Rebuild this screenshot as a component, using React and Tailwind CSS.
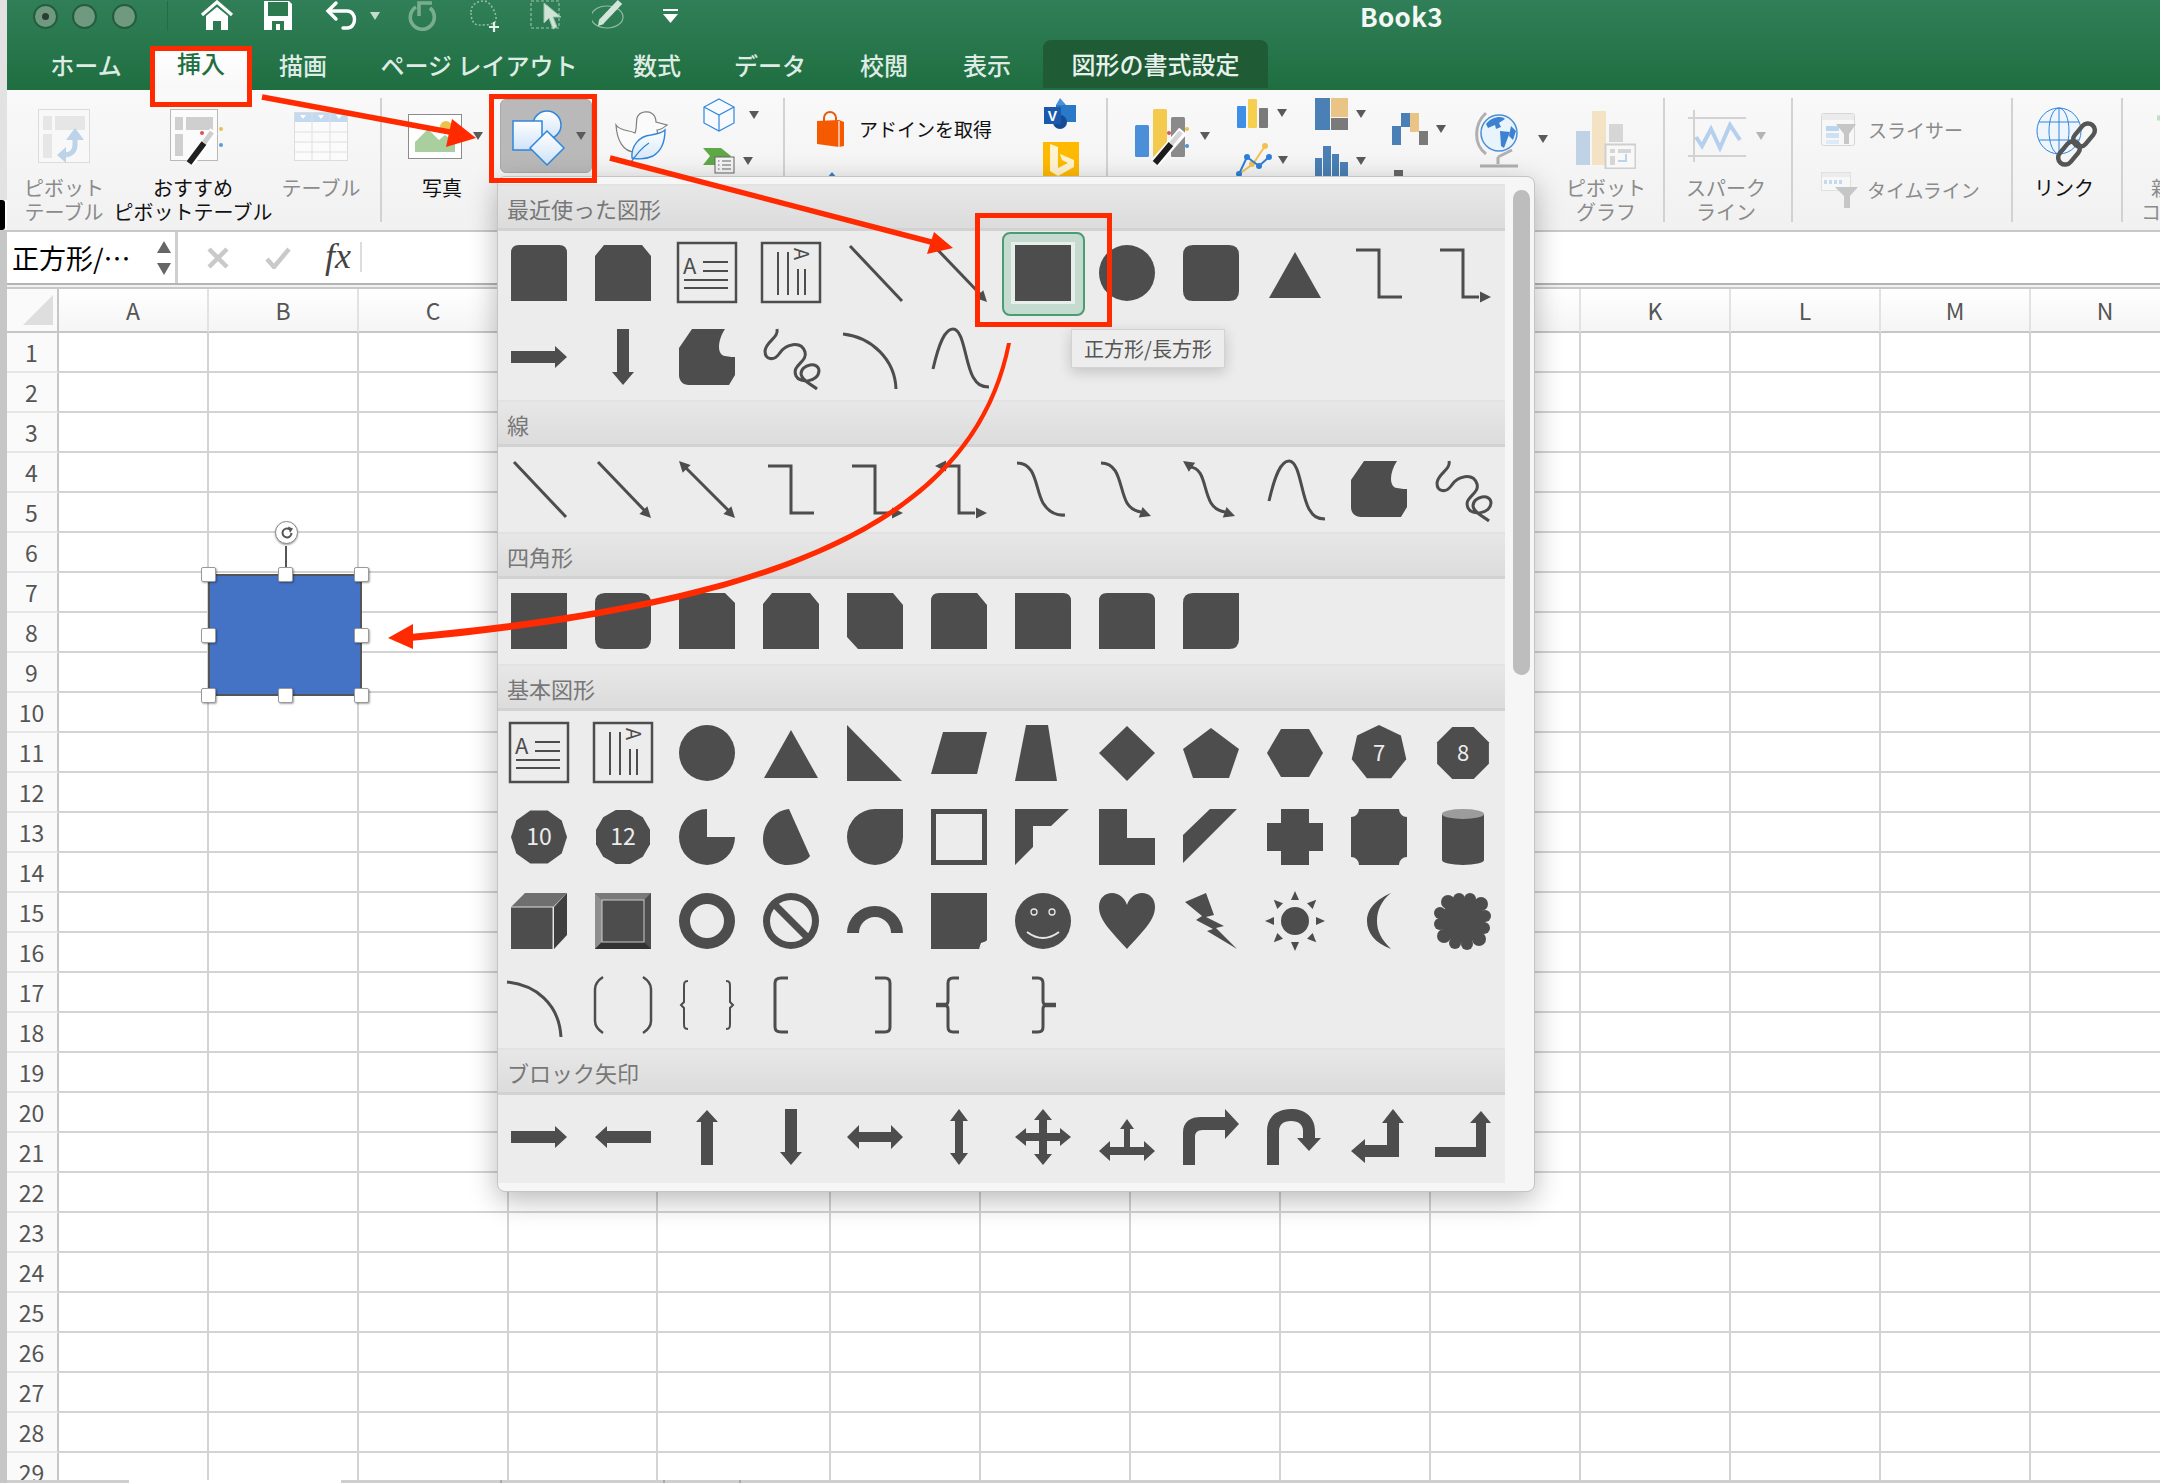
import React from 'react';

const c = '#4d4d4d';
const bg = '#ececec';

const pts = (n, rot = 0, rx = 28, ry = 28) =>
  Array.from({ length: n }, (_, i) => {
    const a = ((rot + (360 * i) / n) * Math.PI) / 180;
    return `${(28 + rx * Math.sin(a)).toFixed(1)},${(28 - ry * Math.cos(a)).toFixed(1)}`;
  }).join(' ');

const F = ({ d }) => <path d={d} fill={c} />;
const L = ({ d, w = 3 }) => <path d={d} fill="none" stroke={c} strokeWidth={w} />;
const Head = ({ x, y, a, s = 1 }) => (
  <polygon points="0,0 -11,-5.5 -11,5.5" fill={c} transform={`translate(${x} ${y}) rotate(${a}) scale(${s})`} />
);
const Num = ({ t, size = 19 }) => (
  <text x="28" y={28 + size * 0.36} textAnchor="middle" fontSize={size} fill={bg} fontFamily="'Noto Sans CJK JP','Liberation Sans',sans-serif">{t}</text>
);

const Scribble = () => <L d="M14 0C16 9 3 12 2 22C2 31 11 32 16 25C22 15 38 11 42 23C45 33 28 36 33 47C37 55 55 53 56 42C56 32 38 35 38 45C39 52 48 55 54 60" />;
const Free = () => <F d="M13 0H46C38 12 38 26 46 27C50 28 56 28 56 28V46L50 56H10C4 56 0 52 0 46V19Z" />;
const Wave = () => <L d="M2 40C8 14 14 0 22 0C33 0 34 34 42 48C46 55 50 58 58 58" />;
const Elbow = () => <L d="M5 5H28V52H51" />;
const TextBox = () => (
  <>
    <rect x="-1" y="-2" width="58" height="59" fill="none" stroke={c} strokeWidth="2.5" />
    <text x="4" y="29" fontSize="22" fill={c} fontFamily="'Noto Sans CJK JP','Liberation Sans',sans-serif">A</text>
    <path d="M24 17H49M24 26H49M5 35H49M5 43H49" stroke={c} strokeWidth="2" />
  </>
);
const VTextBox = () => (
  <>
    <rect x="-1" y="-2" width="58" height="59" fill="none" stroke={c} strokeWidth="2.5" />
    <text x="3" y="-31" fontSize="20" fill={c} transform="rotate(90)" fontFamily="'Noto Sans CJK JP','Liberation Sans',sans-serif">A</text>
    <path d="M15 7V50M25 7V50M35 24V50M42 24V50" stroke={c} strokeWidth="2" />
  </>
);

const S = {
  rect: <F d="M0 0H56V56H0Z" />,
  round: <F d="M10 0H46Q56 0 56 10V46Q56 56 46 56H10Q0 56 0 46V10Q0 0 10 0Z" />,
  snip1: <F d="M0 0H46L56 10V56H0Z" />,
  snip2: <F d="M9 0H47L56 11V56H0V11Z" />,
  snipD: <F d="M0 0H46L56 12V56H11L0 44Z" />,
  snipR: <F d="M8 0H46L56 12V56H0V8Q0 0 8 0Z" />,
  round1: <F d="M0 0H48Q56 0 56 8V56H0Z" />,
  round2: <F d="M8 0H48Q56 0 56 8V56H0V8Q0 0 8 0Z" />,
  roundD: <F d="M10 0H56V46Q56 56 46 56H0V10Q0 0 10 0Z" />,
  ellipse: <ellipse cx="28" cy="28" rx="28" ry="28" fill={c} />,
  tri0: <F d="M28 7L54 53H2Z" />,
  tri: <F d="M28 5L55 53H1Z" />,
  rtri: <F d="M0 0L55 56H0Z" />,
  para: <F d="M12 7H56L46 49H0Z" />,
  trap: <F d="M11 0H33L42 56H0Z" transform="translate(7 0)" />,
  diamond: <polygon points="28,1 56,28 28,56 0,28" fill={c} />,
  pent: <polygon points="28,3 56,24 46,53 10,53 0,24" fill={c} />,
  hex: <polygon points="14,4 42,4 56,28 42,52 14,52 0,28" fill={c} />,
  hept: <><polygon points={pts(7, 0)} fill={c} /><Num t="7" size={22} /></>,
  oct: <><polygon points={pts(8, 22.5)} fill={c} /><Num t="8" size={22} /></>,
  dec: <><polygon points={pts(10, 18)} fill={c} /><Num t="10" size={23} /></>,
  dod: <><polygon points={pts(12, 15)} fill={c} /><Num t="12" size={23} /></>,
  line: <L d="M3 1L55 56" />,
  lineA: <><L d="M3 1L50 50" /><Head x={56} y={57} a={46} /></>,
  lineD: <><L d="M6 6L50 50" /><Head x={0} y={0} a={226} /><Head x={56} y={57} a={46} /></>,
  elbow: <Elbow />,
  elbowA: <><L d="M5 5H28V52H44" /><Head x={56} y={52} a={0} /></>,
  elbowD: <><L d="M15 5H28V52H44" /><Head x={4} y={5} a={180} /><Head x={56} y={52} a={0} /></>,
  curve: <L d="M2 2C22 2 20 28 28 42C33 50 40 55 50 54" />,
  curveA: <><L d="M2 2C22 2 20 28 28 42C31 47 36 50 42 51" /><Head x={52} y={55} a={20} /></>,
  curveD: <><L d="M6 6C22 6 20 28 28 42C31 47 36 50 42 51" /><Head x={0} y={0} a={215} /><Head x={52} y={55} a={20} /></>,
  free: <Free />,
  scribble: <Scribble />,
  wave: <Wave />,
  arc0: <L d="M-4 5C24 8 48 30 49 60" />,
  textbox: <TextBox />,
  vtextbox: <VTextBox />,
  pie: <F d="M28 28V0A28 28 0 1 0 56 28Z" />,
  chord: <F d="M26 0C10 2 0 16 0 30C0 46 12 56 24 56C34 56 44 52 47 47Z" />,
  tear: <F d="M56 0V28A28 28 0 1 1 28 0Z" />,
  frame: <path d="M0 0H56V56H0ZM5 5V51H51V5Z" fill={c} fillRule="evenodd" />,
  half: <F d="M0 0H54L36 17H18V38L0 56Z" />,
  lshape: <F d="M0 0H28V29H56V56H0Z" />,
  stripe: <F d="M27 0H54L0 54V26Z" />,
  plus: <F d="M14 0H42V14H56V42H42V56H14V42H0V14H14Z" />,
  plaque: <F d="M8 0H48A8 8 0 0 0 56 8V48A8 8 0 0 0 48 56H8A8 8 0 0 0 0 48V8A8 8 0 0 0 8 0Z" />,
  can: <><F d="M7 5V51A21 5 0 0 0 49 51V5Z" /><ellipse cx="28" cy="5" rx="21" ry="5" fill="#9c9c9c" /></>,
  cube: <><F d="M0 14H42V56H0Z" /><path d="M0 14L14 0H56L42 14Z" fill="#6f6f6f" /><path d="M43 14L56 0V42L43 56Z" fill="#3f3f3f" /><path d="M0 14H42V56" fill="none" stroke="#ddd" strokeWidth="1" /></>,
  bevel: <><F d="M0 0H56V56H0Z" /><path d="M0 0H56L49 7H7Z" fill="#7a7a7a" /><path d="M0 0L7 7V49L0 56Z" fill="#8e8e8e" /><path d="M0 56L7 49H49L56 56Z" fill="#333" /><rect x="7" y="7" width="42" height="42" fill="none" stroke="#ccc" strokeWidth="1" /></>,
  donut: <path d="M28 0A28 28 0 1 1 28 56A28 28 0 1 1 28 0ZM28 11A17 17 0 1 0 28 45A17 17 0 1 0 28 11Z" fill={c} fillRule="evenodd" />,
  no: <><path d="M28 0A28 28 0 1 1 28 56A28 28 0 1 1 28 0ZM28 7A21 21 0 1 0 28 49A21 21 0 1 0 28 7Z" fill={c} fillRule="evenodd" /><path d="M12 12L44 44" stroke={c} strokeWidth="7" /></>,
  barc: <F d="M0 40A28 27 0 0 1 56 40H44A16 16 0 0 0 12 40Z" />,
  fold: <><F d="M0 0H56V47L48 56H0Z" /><path d="M48 56L50 50L56 48Z" fill="#f4f4f4" /></>,
  smile: <><circle cx="28" cy="28" r="28" fill={c} /><circle cx="19" cy="19" r="3" fill={c} stroke="#e6e6e6" strokeWidth="1.3" /><circle cx="37" cy="19" r="3" fill={c} stroke="#e6e6e6" strokeWidth="1.3" /><path d="M12 39Q28 51 44 39" fill="none" stroke="#e6e6e6" strokeWidth="2" /></>,
  heart: <F d="M28 56C14 40 0 28 0 14C0 5 6 0 13 0C20 0 26 5 28 12C30 5 36 0 43 0C50 0 56 5 56 14C56 28 42 40 28 56Z" />,
  bolt: <F d="M2 9L23 0L31 22L23 24L41 33L33 35L54 56L24 38L30 36L13 27L19 23Z" />,
  sun: <><circle cx="28" cy="28" r="14" fill={c} />{[0, 45, 90, 135, 180, 225, 270, 315].map((a) => <polygon key={a} points="24,7 32,7 28,-2" fill={c} transform={`rotate(${a} 28 28)`} />)}</>,
  moon: <F d="M40 0C22 8 16 18 16 28C16 40 24 50 40 56C30 46 26 38 26 28C26 18 30 8 40 0Z" />,
  cloud: <g fill={c}>{[[13, 9, 7], [24, 6, 6], [35, 6, 6], [46, 11, 7], [50, 23, 6], [49, 35, 6], [44, 46, 7], [32, 51, 6], [20, 50, 6], [9, 43, 7], [5, 31, 6], [5, 20, 6], [28, 28, 22]].map(([x, y, r], i) => <circle key={i} cx={x} cy={y} r={r} />)}</g>,
  arc: <L d="M-4 5C24 8 48 26 50 60" />,
  dbracket: <L d="M8 0C2 4 0 8 0 12V44C0 48 2 52 8 56M48 0C54 4 56 8 56 12V44C56 48 54 52 48 56" w={2.5} />,
  dbrace: <L d="M9 4C5 4 5 6 5 10V25L2 28L5 31V46C5 50 5 52 9 52M47 4C51 4 51 6 51 10V25L54 28L51 31V46C51 50 51 52 47 52" w={2} />,
  lb: <L d="M25 1H18Q12 1 12 6V50Q12 55 18 55H25" />,
  rb: <L d="M28 1H38Q43 1 43 6V50Q43 55 38 55H28" />,
  lbr: <><L d="M28 1H22Q17 1 17 6V24Q17 28 13 28Q17 28 17 32V50Q17 55 22 55H28" /><path d="M5 28H16" stroke={c} strokeWidth="4.5" /></>,
  rbr: <><L d="M17 1H23Q28 1 28 6V24Q28 28 32 28Q28 28 28 32V50Q28 55 23 55H17" /><path d="M30 28H41" stroke={c} strokeWidth="4.5" /></>,
  aR: <F d="M0 22H44V17L56 28L44 39V34H0Z" />,
  aL: <F d="M56 22H12V17L0 28L12 39V34H56Z" />,
  aU: <F d="M22 56V13H17L28 1L39 13H34V56Z" />,
  aD: <F d="M22 0H34V43H39L28 56L17 43H22Z" />,
  aLR: <F d="M0 28L12 16V23H44V16L56 28L44 40V33H12V40Z" />,
  aUD: <F d="M28 0L37 12H32V44H37L28 56L19 44H24V12H19Z" />,
  aQ: <F d="M28 0L37 11H32V24H45V19L56 28L45 37V32H32V45H37L28 56L19 45H24V32H11V37L0 28L11 19V24H24V11H19Z" />,
  aLRU: <F d="M28 10L35 20H31V38H45V32L56 42L45 52V46H11V52L0 42L11 32V38H25V20H21Z" />,
  aBent: <F d="M0 56V24C0 12 8 8 18 8H42V0L56 15L42 30V21H20C14 21 12 24 12 28V56Z" />,
  aUturn: <F d="M0 56V22C0 8 10 0 24 0C38 0 48 8 48 22V29H54L42 42L30 29H36V22C36 16 32 12 24 12C16 12 12 16 12 22V56Z" />,
  aLU: <F d="M42 0L53 14H48V48H14V54L0 42L14 30V36H36V14H31Z" />,
  aBU: <F d="M0 38H41V14H35L46 2L56 14H51V48H0Z" />,
};

const Shape = ({ k }) => (
  <svg viewBox="0 0 56 56" className="h-[56px] w-[56px] overflow-visible">{S[k]}</svg>
);

const Caret = ({ dim }) => (
  <svg viewBox="0 0 10 8" className="h-[8px] w-[10px] shrink-0">
    <polygon points="0,0 10,0 5,8" fill={dim ? '#b4b4b4' : '#5a5a5a'} />
  </svg>
);

/* ---------- quick-access toolbar icons ---------- */
const QSvg = ({ children, className = 'ml-0' }) => (
  <svg viewBox="0 0 34 34" className={`h-[34px] w-[34px] shrink-0 ${className}`}>{children}</svg>
);
const Faded = '#79ad90';

const TitleRow = () => (
  <div className="flex h-[32px] items-center">
    <div className="ml-[26px] flex h-[25px] w-[25px] items-center justify-center rounded-full border-2 border-[#245c3e] bg-[#6f9a80]">
      <div className="h-[7px] w-[7px] rounded-full bg-[#2d3b33]" />
    </div>
    <div className="ml-[14px] h-[25px] w-[25px] rounded-full border-2 border-[#245c3e] bg-[#6f9a80]" />
    <div className="ml-[15px] h-[25px] w-[25px] rounded-full border-2 border-[#245c3e] bg-[#6f9a80]" />
    <div className="ml-[30px] h-[30px] w-[1px] bg-[#28694a]" />
    <QSvg className="ml-[32px]">
      <path d="M2 16L17 3L32 16" fill="none" stroke="#fff" strokeWidth="3.2" />
      <path d="M6 17L17 8L28 17V31H21V22H13V31H6Z" fill="#fff" />
    </QSvg>
    <QSvg className="ml-[27px]">
      <path d="M3 2H28L31 5V31H3Z" fill="#fff" />
      <rect x="7" y="3" width="20" height="14" fill="#2d7a50" />
      <rect x="11" y="22" width="12" height="9" fill="#2d7a50" />
      <rect x="15" y="25" width="4" height="6" fill="#fff" />
    </QSvg>
    <QSvg className="ml-[29px]">
      <path d="M12 4L4 12L12 20" fill="none" stroke="#fff" strokeWidth="3.4" strokeLinecap="round" />
      <path d="M5 12H23C33 12 33 29 23 29H19" fill="none" stroke="#fff" strokeWidth="3.4" strokeLinecap="round" />
    </QSvg>
    <div className="ml-[12px]">
      <svg viewBox="0 0 10 8" className="h-[8px] w-[10px]"><polygon points="0,0 10,0 5,8" fill="#c4dccf" /></svg>
    </div>
    <QSvg className="ml-[24px]">
      <path d="M12 8A12 12 0 1 0 26 9" fill="none" stroke={Faded} strokeWidth="3.6" />
      <path d="M28 4H15V17" fill="none" stroke={Faded} strokeWidth="3.6" />
    </QSvg>
    <QSvg className="ml-[29px]">
      <path d="M4 13C4 5 11 2 17 2C23 2 30 14 29 21C28 26 18 26 12 26C6 26 4 20 4 13" fill="none" stroke="#8fbda4" strokeWidth="1.6" strokeDasharray="2 2" />
      <path d="M27 23V33M22 28H32" stroke="#e4f0e9" strokeWidth="2.2" />
    </QSvg>
    <QSvg className="ml-[28px]">
      <rect x="2" y="2" width="28" height="27" fill="none" stroke={Faded} strokeWidth="1.6" strokeDasharray="3 2" />
      <path d="M15 4V24L20 19L24 30L28 28L24 18H32Z" fill="#cfe3d7" stroke="#9cc4ae" strokeWidth="1" />
    </QSvg>
    <QSvg className="ml-[29px]">
      <ellipse cx="15" cy="18" rx="16" ry="11" fill="none" stroke="#8fbda4" strokeWidth="1.2" />
      <path d="M9 23L28 3" stroke="#d4e6db" strokeWidth="6" />
      <path d="M6 27L7 21L12 25Z" fill="#d4e6db" />
    </QSvg>
    <div className="ml-[37px] flex w-[15px] flex-col gap-[3px]">
      <div className="h-[2px] w-[15px] bg-white" />
      <svg viewBox="0 0 15 9" className="h-[9px] w-[15px]"><polygon points="0,0 15,0 7.5,9" fill="#fff" /></svg>
    </div>
    <div className="ml-[682px] text-[26px] font-bold leading-[30px] tracking-[0.3px] text-[#f4f8f5]">Book3</div>
  </div>
);

const tabBase = 'flex items-center justify-center text-[24px] font-medium leading-[28px]';
const tabIdle = `${tabBase} h-[50px] text-[#dfece5]`;

const Tabs = () => (
  <div className="flex h-[58px] items-end">
    <div className={`${tabIdle} ml-[23px] w-[112px]`}>ホーム</div>
    <div className="ml-[13px] flex h-[40px] w-[92px] justify-center bg-linear-to-b from-[#ffffff] to-[#f8f8f8] text-[24px] font-medium leading-[28px] text-[#1f6f40]">
      <span className="-mt-[1px]">挿入</span>
    </div>
    <div className={`${tabIdle} w-[112px]`}>描画</div>
    <div className={`${tabIdle} w-[240px]`}>ページ レイアウト</div>
    <div className={`${tabIdle} w-[116px]`}>数式</div>
    <div className={`${tabIdle} w-[110px]`}>データ</div>
    <div className={`${tabIdle} w-[118px]`}>校閲</div>
    <div className={`${tabIdle} w-[88px]`}>表示</div>
    <div className={`${tabBase} ml-[12px] h-[48px] mb-[2px] w-[225px] rounded-t-[8px] bg-[#1f5c36] text-[#e8f2ec]`}>図形の書式設定</div>
  </div>
);

/* ---------- ribbon icons ---------- */
const PivotI = () => (
  <svg viewBox="0 0 52 54" className="h-[54px] w-[52px]">
    <rect x="0.5" y="0.5" width="51" height="53" fill="#f8f8f8" stroke="#dcdcdc" />
    <rect x="5" y="7" width="9" height="14" fill="#e6e6e6" /><rect x="17" y="7" width="30" height="14" fill="#e6e6e6" /><rect x="5" y="25" width="9" height="24" fill="#e6e6e6" />
    <path d="M37 26V36C37 43 32 46 26 46" fill="none" stroke="#bcd3ea" strokeWidth="5" />
    <path d="M37 19L46 31H28Z" fill="#bcd3ea" /><path d="M19 46L28 38V54Z" fill="#bcd3ea" />
  </svg>
);
const RecPivotI = () => (
  <svg viewBox="0 0 56 56" className="h-[56px] w-[56px] overflow-visible">
    <rect x="5.5" y="1.5" width="47" height="51" fill="#fbfbfb" stroke="#b9b9b9" />
    <rect x="10" y="9" width="8" height="13" fill="#cfcfcf" /><rect x="21" y="9" width="27" height="13" fill="#cfcfcf" /><rect x="10" y="26" width="8" height="22" fill="#cfcfcf" />
    <path d="M25 55L49 23" stroke="#fff" strokeWidth="9" />
    <path d="M24 55L39 35" stroke="#1f1f1f" strokeWidth="6" /><path d="M39 35L47 24" stroke="#cfcfcf" strokeWidth="5" />
    <circle cx="37" cy="25" r="2" fill="#d95555" /><circle cx="56" cy="21" r="2" fill="#eec04c" /><circle cx="56" cy="37" r="2" fill="#5e9bd8" />
  </svg>
);
const TableI = () => (
  <svg viewBox="0 0 54 49" className="h-[49px] w-[54px]">
    <rect x="0.5" y="0.5" width="53" height="48" fill="#fbfbfb" stroke="#dcdcdc" />
    <rect x="1" y="1" width="52" height="9" fill="#c3d9ef" />
    <path d="M18 0V49M36 0V49M0 20H54M0 30H54M0 40H54" stroke="#dfdfdf" />
    <path d="M6 3H12L9 7ZM24 3H30L27 7ZM42 3H48L45 7Z" fill="#fff" />
  </svg>
);
const PhotoI = () => (
  <svg viewBox="0 0 54 45" className="h-[45px] w-[54px]">
    <rect x="0.5" y="0.5" width="53" height="44" fill="#fff" stroke="#8c8c8c" />
    <circle cx="38" cy="13" r="6" fill="#eec04c" />
    <path d="M7 38V28L20 15L31 26L37 21L47 28V38Z" fill="#a9cf9f" />
  </svg>
);
const ShapesI = () => (
  <svg viewBox="0 0 56 56" className="h-[56px] w-[56px] overflow-visible">
    <defs>
      <linearGradient id="sg" x1="0" y1="0" x2="0" y2="1"><stop offset="0" stopColor="#ffffff" /><stop offset="1" stopColor="#cfe3f7" /></linearGradient>
    </defs>
    <circle cx="35" cy="17" r="14" fill="url(#sg)" stroke="#2f86dc" strokeWidth="1.5" />
    <rect x="1" y="13" width="29" height="29" fill="url(#sg)" stroke="#2f86dc" strokeWidth="1.5" />
    <polygon points="35,23 52,40 35,57 18,40" fill="url(#sg)" stroke="#2f86dc" strokeWidth="1.5" />
  </svg>
);
const DuckI = () => (
  <svg viewBox="0 0 52 52" className="h-[52px] w-[52px] overflow-visible">
    <defs><linearGradient id="lg" x1="0" y1="0" x2="0" y2="1"><stop offset="0" stopColor="#ffffff" /><stop offset="1" stopColor="#d6e8f9" /></linearGradient></defs>
    <path d="M1 15C5 21 14 20 20 23C22 18 21 12 22 8C24 1 36 -1 40 7C41 10 41 11 41 12L52 15C48 18 46 20 42 20C42 22 44 25 42 30C40 40 30 42 20 42C8 42 2 30 1 15Z" fill="#fbfbfb" stroke="#7f7f7f" strokeWidth="1.2" />
    <path d="M17 48C16 36 24 26 36 25C42 24 48 22 50 20C50 30 48 40 38 46C30 50 22 49 17 48Z" fill="url(#lg)" stroke="#2f86dc" strokeWidth="1.4" />
    <path d="M14 55C20 46 26 38 34 33" fill="none" stroke="#2f86dc" strokeWidth="1.4" />
  </svg>
);
const CubeI = () => (
  <svg viewBox="0 0 32 34" className="h-[34px] w-[32px]">
    <path d="M16 1L31 9V25L16 33L1 25V9Z" fill="#f7fbff" stroke="#2f86dc" strokeWidth="1.2" />
    <path d="M1 9L16 17L31 9M16 17V33" fill="none" stroke="#2f86dc" strokeWidth="1.2" />
  </svg>
);
const SmartI = () => (
  <svg viewBox="0 0 32 26" className="h-[26px] w-[32px] overflow-visible">
    <path d="M0 0H18L28 8L18 17H0L7 8Z" fill="#5ea846" />
    <rect x="12" y="9" width="19" height="16" fill="#f4f4f4" stroke="#666" strokeWidth="1" />
    <path d="M15 13H16.5M19 13H28M15 17H16.5M19 17H28M15 21H16.5M19 21H28" stroke="#666" />
  </svg>
);
const BagI = () => (
  <svg viewBox="0 0 28 36" className="h-[36px] w-[28px]">
    <path d="M8 10V7A6 6 0 0 1 20 7V12" fill="none" stroke="#e85a0c" strokeWidth="2" />
    <path d="M1 10L23 9L28 11V35L23 36L1 33Z" fill="#f55a00" />
    <path d="M23 10V36" stroke="#ffd9c4" strokeWidth="1.5" />
  </svg>
);
const VisioI = () => (
  <svg viewBox="0 0 33 31" className="h-[31px] w-[33px]">
    <path d="M17 0L23 7H13Z" fill="#4b8fd6" />
    <rect x="13" y="7" width="20" height="17" fill="#2a78c8" />
    <circle cx="17" cy="24" r="7" fill="#174a94" />
    <rect x="1" y="9" width="17" height="17" fill="#1b59ad" />
    <text x="9.5" y="23" textAnchor="middle" fontSize="14" fill="#fff" fontWeight="bold" fontFamily="'Liberation Sans',sans-serif">V</text>
  </svg>
);
const BingI = () => (
  <svg viewBox="0 0 36 36" className="h-[36px] w-[36px] shrink-0">
    <rect width="36" height="36" fill="#ffb900" />
    <path d="M7 2L15 5V26L25 21L19 18L17 12L31 18V25L15 34L7 29Z" fill="#fff3d0" />
  </svg>
);
const RecChartI = () => (
  <svg viewBox="0 0 56 54" className="h-[54px] w-[56px] overflow-visible">
    <rect x="0" y="16" width="14" height="32" rx="1.5" fill="#4a8fd8" />
    <rect x="18" y="0" width="14" height="48" rx="1.5" fill="#f3c94e" />
    <rect x="36" y="8" width="14" height="40" rx="1.5" fill="#8a8a8a" />
    <path d="M20 54L48 22" stroke="#fff" strokeWidth="10" />
    <path d="M20 54L36 35" stroke="#1c1c1c" strokeWidth="6" /><path d="M36 35L46 23" stroke="#d5d5d5" strokeWidth="5" />
    <circle cx="34" cy="24" r="2" fill="#d95555" /><circle cx="52" cy="20" r="2" fill="#eec04c" /><circle cx="52" cy="37" r="2" fill="#4a8fd8" />
  </svg>
);
const BarI = () => (
  <svg viewBox="0 0 31 29" className="h-[29px] w-[31px]">
    <rect x="0" y="7" width="9" height="22" rx="1" fill="#3f8fe6" />
    <rect x="11" y="0" width="9" height="29" rx="1" fill="#f7cf4f" />
    <rect x="22" y="9" width="9" height="20" rx="1" fill="#7a7a7a" />
  </svg>
);
const TreeI = () => (
  <svg viewBox="0 0 33 32" className="h-[32px] w-[33px]">
    <rect x="0" y="0" width="15" height="32" fill="#4a80b5" />
    <rect x="16" y="0" width="17" height="19" fill="#eac484" />
    <rect x="16" y="20" width="17" height="12" fill="#7a7a7a" />
  </svg>
);
const LineI = () => (
  <svg viewBox="0 0 36 32" className="h-[32px] w-[36px] overflow-visible">
    <path d="M2 30L16 20L28 2" fill="none" stroke="#f0c254" strokeWidth="2" /><circle cx="28" cy="2" r="3" fill="#f0c254" /><circle cx="15" cy="20" r="3" fill="#f0c254" />
    <path d="M2 30L10 13L22 22L32 13" fill="none" stroke="#2f7fd8" strokeWidth="2" />
    <circle cx="2" cy="30" r="3" fill="#2f7fd8" /><circle cx="10" cy="13" r="3" fill="#2f7fd8" /><circle cx="22" cy="22" r="3" fill="#2f7fd8" /><circle cx="32" cy="13" r="3" fill="#2f7fd8" />
  </svg>
);
const HistI = () => (
  <svg viewBox="0 0 33 30" className="h-[30px] w-[33px]">
    <rect x="0" y="12" width="7" height="18" fill="#4a80b5" /><rect x="8" y="0" width="8" height="30" fill="#4a80b5" />
    <rect x="17" y="8" width="7" height="22" fill="#4a80b5" /><rect x="25" y="16" width="8" height="14" fill="#4a80b5" />
  </svg>
);
const WaterI = () => (
  <svg viewBox="0 0 36 32" className="h-[32px] w-[36px]">
    <rect x="0" y="13" width="9" height="19" fill="#4a80b5" /><rect x="9" y="0" width="9" height="14" fill="#4a80b5" />
    <rect x="18" y="0" width="9" height="19" fill="#eac484" /><rect x="27" y="18" width="9" height="14" fill="#7a7a7a" />
  </svg>
);
const GlobeI = () => (
  <svg viewBox="0 0 48 58" className="h-[58px] w-[48px]">
    <path d="M12 3C0 14 -1 34 12 44" fill="none" stroke="#b0b0b0" strokeWidth="3" />
    <circle cx="25" cy="23" r="18" fill="#e9f3fc" stroke="#4a8fd8" strokeWidth="1.5" />
    <path d="M12 14C17 7 28 5 31 9L25 13L27 17L22 19L21 15L14 18ZM26 21L36 22L30 38L27 36Z" fill="#3c82d0" />
    <path d="M37 16L42 21L39 30L35 26Z" fill="#3c82d0" />
    <path d="M38 40L24 47M24 47V54M6 56H44" fill="none" stroke="#b0b0b0" strokeWidth="3" />
  </svg>
);
const PivotChartI = () => (
  <svg viewBox="0 0 60 58" className="h-[58px] w-[60px]">
    <rect x="0" y="20" width="14" height="34" fill="#bfd2e6" /><rect x="16" y="0" width="14" height="54" fill="#f4e2c4" /><rect x="33" y="13" width="14" height="18" fill="#d6d6d6" />
    <rect x="29.5" y="33.5" width="30" height="24" fill="#f8f8f8" stroke="#cfcfcf" strokeWidth="2" />
    <rect x="34" y="38" width="5" height="4" fill="#d6d6d6" /><rect x="42" y="38" width="13" height="4" fill="#d6d6d6" /><rect x="34" y="45" width="5" height="9" fill="#d6d6d6" />
    <path d="M50 43V50H42" fill="none" stroke="#bcd3ea" strokeWidth="2" />
  </svg>
);
const SparkI = () => (
  <svg viewBox="0 0 58 52" className="h-[52px] w-[58px]">
    <path d="M6 0V52M0 8H58M0 46H58" stroke="#d2d2d2" strokeWidth="2" />
    <path d="M8 27L14 36L23 19L32 38L42 15L52 30" fill="none" stroke="#b4d0ee" strokeWidth="4" />
  </svg>
);
const SlicerI = () => (
  <svg viewBox="0 0 36 34" className="h-[34px] w-[36px]">
    <rect x="0.5" y="0.5" width="33" height="32" rx="2" fill="#f7f7f7" stroke="#d6d6d6" />
    <rect x="1" y="1" width="32" height="6" fill="#ececec" />
    <rect x="5" y="13" width="13" height="5" fill="#bcd5ef" /><rect x="5" y="20" width="13" height="5" fill="#cde0f4" /><rect x="5" y="27" width="13" height="4" fill="#dcebf8" />
    <path d="M15 11H35L28 21V31L23 31V21Z" fill="#c6c6c6" />
  </svg>
);
const TimelineI = () => (
  <svg viewBox="0 0 37 36" className="h-[36px] w-[37px]">
    <rect x="0.5" y="0.5" width="29" height="18" fill="#f7f7f7" stroke="#e0e0e0" />
    <rect x="1" y="1" width="28" height="4" fill="#ececec" />
    <path d="M3 10H6M8 10H11M13 10H16M18 10H21" stroke="#c4d9ef" strokeWidth="4" />
    <path d="M14 15H37L29 24V36H23V24Z" fill="#c6c6c6" />
  </svg>
);
const LinkI = () => (
  <svg viewBox="0 0 58 58" className="h-[58px] w-[58px] overflow-visible">
    <ellipse cx="22" cy="24" rx="22" ry="23" fill="#eef5fc" stroke="#2f86dc" strokeWidth="1" />
    <ellipse cx="22" cy="24" rx="10" ry="23" fill="none" stroke="#2f86dc" strokeWidth="1" />
    <path d="M22 1V47M2 15H42M2 33H42" stroke="#2f86dc" strokeWidth="1" fill="none" />
    <rect x="34" y="21" width="26" height="14" rx="7" fill="none" stroke="#555" strokeWidth="4.5" transform="rotate(-50 47 28)" />
    <rect x="19" y="39" width="26" height="14" rx="7" fill="none" stroke="#555" strokeWidth="4.5" transform="rotate(-50 32 46)" />
  </svg>
);
const CommentI = () => (
  <svg viewBox="0 0 60 58" className="h-[58px] w-[60px]">
    <path d="M13 4V18M6 11H20" stroke="#bfe0c2" strokeWidth="5" />
    <rect x="11" y="20" width="44" height="24" rx="3" fill="#fafafa" stroke="#d0d0d0" strokeWidth="2" />
  </svg>
);

const Sep = ({ className }) => <div className={`h-[124px] w-[2px] shrink-0 bg-[#d2d2d2] ${className}`} />;

const Label = ({ dim, lines }) => (
  <div className={`mt-[2px] flex flex-col items-center text-[20px] leading-[24px] whitespace-nowrap ${dim ? 'text-[#8b8b8b]' : 'text-[#111]'}`}>
    {lines.map((l) => <span key={l}>{l}</span>)}
  </div>
);

const Ribbon = () => (
  <div className="flex h-[142px] shrink-0 border-b-2 border-[#c8c8c8] bg-linear-to-b from-[#f9f9f9] to-[#f1f1f1] pt-[8px]">
    <div className="flex w-[114px] shrink-0 flex-col items-center"><div className="flex h-[76px] items-center"><PivotI /></div><Label dim lines={['ピボット', 'テーブル']} /></div>
    <div className="flex w-[144px] shrink-0 flex-col items-center"><div className="flex h-[76px] items-center"><RecPivotI /></div><Label lines={['おすすめ', 'ピボットテーブル']} /></div>
    <div className="flex w-[112px] shrink-0 flex-col items-center"><div className="flex h-[76px] items-center"><TableI /></div><Label dim lines={['テーブル']} /></div>
    <Sep className="ml-[3px]" />
    <div className="ml-[10px] flex w-[100px] shrink-0 flex-col items-center">
      <div className="flex h-[76px] w-full items-center pl-[16px]"><PhotoI /><div className="ml-[11px]"><Caret /></div></div>
      <Label lines={['写真']} />
    </div>
    <div className="ml-[8px] mt-[1px] flex h-[74px] w-[92px] shrink-0 items-center rounded-[6px] border border-[#a8a8a8] bg-[#b9b9b9] pl-[11px]">
      <ShapesI /><div className="ml-[8px]"><Caret /></div>
    </div>
    <div className="ml-[23px] flex h-[76px] shrink-0 items-center"><DuckI /></div>
    <div className="ml-[36px] flex shrink-0 flex-col">
      <div className="flex h-[34px] items-center"><CubeI /><div className="ml-[14px]"><Caret /></div></div>
      <div className="mt-[16px] flex h-[26px] items-center"><SmartI /><div className="ml-[8px]"><Caret /></div></div>
    </div>
    <Sep className="ml-[24px]" />
    <div className="ml-[31px] flex w-[177px] shrink-0 flex-col">
      <div className="mt-[13px] flex h-[36px] items-center gap-[15px]"><BagI /><span className="text-[19px] leading-[24px] whitespace-nowrap text-[#111]">アドインを取得</span></div>
      <svg viewBox="0 0 20 12" className="ml-[6px] mt-[25px] h-[12px] w-[20px]"><polygon points="10,0 20,12 0,12" fill="#3f7fc4" /></svg>
    </div>
    <div className="ml-[50px] flex shrink-0 flex-col"><VisioI /><div className="mt-[13px]"><BingI /></div></div>
    <Sep className="ml-[27px]" />
    <div className="ml-[27px] flex h-[76px] shrink-0 items-center"><RecChartI /><div className="ml-[9px]"><Caret /></div></div>
    <div className="ml-[27px] flex shrink-0 flex-col">
      <div className="flex h-[30px] items-center"><BarI /><div className="ml-[9px]"><Caret /></div></div>
      <div className="mt-[16px] flex h-[32px] items-center"><LineI /><div className="ml-[5px]"><Caret /></div></div>
    </div>
    <div className="ml-[27px] flex shrink-0 flex-col">
      <div className="flex h-[32px] items-center"><TreeI /><div className="ml-[8px]"><Caret /></div></div>
      <div className="mt-[16px] flex h-[30px] items-center"><HistI /><div className="ml-[8px]"><Caret /></div></div>
    </div>
    <div className="ml-[26px] flex shrink-0 flex-col">
      <div className="mt-[15px] flex h-[32px] items-center"><WaterI /><div className="ml-[8px]"><Caret /></div></div>
      <div className="ml-[2px] mt-[25px] h-[6px] w-[9px] bg-[#666]" />
    </div>
    <div className="ml-[28px] flex h-[76px] shrink-0 items-center pt-[6px]"><GlobeI /><div className="ml-[16px]"><Caret /></div></div>
    <div className="ml-[8px] flex w-[100px] shrink-0 flex-col items-center"><div className="flex h-[76px] items-center pt-[8px]"><PivotChartI /></div><Label dim lines={['ピボット', 'グラフ']} /></div>
    <Sep className="ml-[7px]" />
    <div className="ml-[14px] flex w-[94px] shrink-0 flex-col items-center">
      <div className="flex h-[76px] w-full items-center pl-[9px]"><SparkI /><div className="ml-[10px]"><Caret dim /></div></div>
      <Label dim lines={['スパーク', 'ライン']} />
    </div>
    <Sep className="ml-[18px]" />
    <div className="ml-[28px] flex w-[160px] shrink-0 flex-col text-[19px] leading-[24px] text-[#8b8b8b]">
      <div className="mt-[15px] flex h-[34px] items-center gap-[11px]"><SlicerI /><span>スライサー</span></div>
      <div className="mt-[25px] flex h-[36px] items-center gap-[9px]"><TimelineI /><span className="whitespace-nowrap">タイムライン</span></div>
    </div>
    <Sep className="ml-[30px]" />
    <div className="ml-[1px] flex w-[100px] shrink-0 flex-col items-center"><div className="flex h-[76px] items-center pl-[4px]"><LinkI /></div><Label lines={['リンク']} /></div>
    <Sep className="ml-[7px]" />
    <div className="ml-[18px] flex w-[80px] shrink-0 flex-col items-center"><div className="flex h-[76px] items-center"><CommentI /></div><Label dim lines={['新しい', 'コメント']} /></div>
  </div>
);

const FormulaBar = () => (
  <div className="flex h-[53px] shrink-0 border-b-2 border-[#b4b4b4] bg-white">
    <div className="flex h-full w-[171px] shrink-0 items-center border-r-[3px] border-[#cfcfcf] pl-[5px]">
      <span className="w-[145px] text-[27px] leading-[34px] whitespace-nowrap text-black">正方形/…</span>
      <div className="flex flex-col gap-[10px]">
        <svg viewBox="0 0 14 12" className="h-[12px] w-[14px]"><polygon points="7,0 14,12 0,12" fill="#666" /></svg>
        <svg viewBox="0 0 14 12" className="h-[12px] w-[14px]"><polygon points="0,0 14,0 7,12" fill="#666" /></svg>
      </div>
    </div>
    <svg viewBox="0 0 22 22" className="ml-[29px] mt-[15px] h-[22px] w-[22px]"><path d="M2 2L20 20M20 2L2 20" stroke="#c9c9c9" strokeWidth="4.5" /></svg>
    <svg viewBox="0 0 26 22" className="ml-[36px] mt-[15px] h-[22px] w-[26px]"><path d="M2 12L9 20L24 2" fill="none" stroke="#c9c9c9" strokeWidth="4.5" /></svg>
    <span className="ml-[34px] mt-[5px] font-['Liberation_Serif',serif] text-[36px] italic leading-[38px] text-[#444]">fx</span>
    <div className="ml-[9px] mt-[10px] h-[30px] w-[2px] bg-[#dcdcdc]" />
  </div>
);

const cols = ['A', 'B', 'C', 'D', 'E', 'F', 'G', 'H', 'I', 'J', 'K', 'L', 'M', 'N'];
const rows = Array.from({ length: 30 }, (_, i) => i + 1);

const Sheet = () => (
  <div className="min-h-0 flex-1 overflow-hidden">
    <div className="grid auto-rows-[40px] grid-rows-[44px] grid-cols-[52px_150px_150px_150px_149px_173px_150px_150px_150px_150px_150px_150px_150px_150px_150px] text-[23px] text-[#555]">
      <div className="flex items-center justify-center border-r-2 border-b-2 border-[#c6c6c6] bg-[#fafafa]">
        <svg viewBox="0 0 30 30" className="ml-[12px] h-[30px] w-[30px]"><polygon points="30,0 30,30 0,30" fill="#dedede" /></svg>
      </div>
      {cols.map((l) => (
        <div key={l} className="flex items-center justify-center border-r-2 border-b-2 border-r-[#e2e2e2] border-b-[#c6c6c6] bg-linear-to-b from-[#ffffff] to-[#f5f5f5]">{l}</div>
      ))}
      {rows.map((r) => (
        <React.Fragment key={r}>
          <div className="flex items-center justify-center border-r-2 border-b-2 border-r-[#c6c6c6] border-b-[#e6e6e6] bg-[#fafafa] pr-[1px]">{r}</div>
          {cols.map((l) => (
            <div key={l} className="border-r-2 border-b-2 border-[#d3d3d3] bg-white" />
          ))}
        </React.Fragment>
      ))}
    </div>
  </div>
);

const StatusBar = () => (
  <div className="flex h-[3px] shrink-0 bg-[#cfcfcf]">
    <div className="w-[122px]" />
    <div className="w-[212px] bg-white" />
    <div className="ml-[159px] w-[2px] bg-[#aaa]" />
    <div className="ml-[161px] w-[2px] bg-[#aaa]" />
    <div className="ml-[74px] w-[2px] bg-[#aaa]" />
  </div>
);

/* ---------- shapes gallery ---------- */
const Head2 = ({ t }) => (
  <div className="flex h-[47px] items-center border-b-[3px] border-t-[2px] border-t-[#e2e2e2] border-b-[#d2d2d2] bg-linear-to-b from-[#e7e7e7] to-[#dcdcdc] pl-[9px] pt-[2px] text-[22px] leading-[26px] text-[#777]">{t}</div>
);

const Grid = ({ items, sel }) => (
  <div className="grid grid-cols-[repeat(12,56px)] gap-x-[28px] gap-y-[28px] pb-[15px] pl-[13px] pt-[14px]">
    {items.map((k, i) => (
      <div key={i} className="relative h-[56px] w-[56px]">
        {sel === i && (
          <div className="absolute -bottom-[15px] -left-[13px] -right-[14px] -top-[13px] rounded-[8px] border-2 border-[#4a9c72] bg-[#c5dbd0]">
            <div className="absolute bottom-[10px] left-[7px] right-[8px] top-[8px] bg-[#e6efe9]" />
          </div>
        )}
        <div className="relative"><Shape k={k} /></div>
      </div>
    ))}
  </div>
);

const Gallery = () => (
  <div className="absolute left-[497px] top-[176px] flex h-[1016px] w-[1038px] flex-col rounded-[8px] border border-[#c4c4c4] bg-[#f6f6f6] shadow-[0_8px_28px_rgba(0,0,0,0.28)]">
    <div className="flex h-[999px] mt-[7px]">
      <div className="w-[1007px] shrink-0 bg-[#ececec]">
        <Head2 t="最近使った図形" />
        <Grid sel={6} items={['round2', 'snip2', 'textbox', 'vtextbox', 'line', 'lineA', 'rect', 'ellipse', 'round', 'tri0', 'elbow', 'elbowA', 'aR', 'aD', 'free', 'scribble', 'arc0', 'wave']} />
        <Head2 t="線" />
        <Grid items={['line', 'lineA', 'lineD', 'elbow', 'elbowA', 'elbowD', 'curve', 'curveA', 'curveD', 'wave', 'free', 'scribble']} />
        <Head2 t="四角形" />
        <Grid items={['rect', 'round', 'snip1', 'snip2', 'snipD', 'snipR', 'round1', 'round2', 'roundD']} />
        <Head2 t="基本図形" />
        <Grid items={['textbox', 'vtextbox', 'ellipse', 'tri', 'rtri', 'para', 'trap', 'diamond', 'pent', 'hex', 'hept', 'oct', 'dec', 'dod', 'pie', 'chord', 'tear', 'frame', 'half', 'lshape', 'stripe', 'plus', 'plaque', 'can', 'cube', 'bevel', 'donut', 'no', 'barc', 'fold', 'smile', 'heart', 'bolt', 'sun', 'moon', 'cloud', 'arc', 'dbracket', 'dbrace', 'lb', 'rb', 'lbr', 'rbr']} />
        <Head2 t="ブロック矢印" />
        <Grid items={['aR', 'aL', 'aU', 'aD', 'aLR', 'aUD', 'aQ', 'aLRU', 'aBent', 'aUturn', 'aLU', 'aBU']} />
      </div>
      <div className="ml-[8px] mt-[6px] h-[485px] w-[17px] rounded-full bg-[#bdbdbd]" />
    </div>
  </div>
);

const Tooltip = () => (
  <div className="absolute left-[1071px] top-[329px] flex h-[39px] w-[154px] items-center justify-center border border-[#d2d2d2] bg-[#ededed] text-[20px] text-[#555] shadow-[0_4px_14px_rgba(0,0,0,0.18)]">正方形/長方形</div>
);

const Handle = ({ className }) => (
  <div className={`absolute h-[15px] w-[15px] rounded-[2px] border border-[#9a9a9a] bg-white shadow-[1px_1px_2px_rgba(0,0,0,0.35)] ${className}`} />
);

const SelectedShape = () => (
  <div className="absolute left-[208px] top-[574px] h-[122px] w-[154px] border-2 border-[#555] bg-[#4472c4]">
    <div className="absolute -top-[30px] left-[75px] h-[30px] w-[2px] bg-[#555]" />
    <div className="absolute -top-[55px] left-[65px] flex h-[23px] w-[23px] items-center justify-center rounded-full border border-[#888] bg-white shadow-[0_1px_2px_rgba(0,0,0,0.35)]">
      <svg viewBox="0 0 14 14" className="h-[14px] w-[14px]"><path d="M11.5 7A4.5 4.5 0 1 1 9.5 3.2" fill="none" stroke="#555" strokeWidth="2" /><path d="M8 0.5L13 2.5L10 7Z" fill="#555" /></svg>
    </div>
    <Handle className="-left-[9px] -top-[9px]" />
    <Handle className="-top-[9px] left-[68px]" />
    <Handle className="-right-[9px] -top-[9px]" />
    <Handle className="-left-[9px] top-[52px]" />
    <Handle className="-right-[9px] top-[52px]" />
    <Handle className="-bottom-[9px] -left-[9px]" />
    <Handle className="-bottom-[9px] left-[68px]" />
    <Handle className="-bottom-[9px] -right-[9px]" />
  </div>
);

const Annotations = () => (
  <>
    <div className="absolute left-[150px] top-[46px] h-[61px] w-[102px] border-[5px] border-[#ff2a00]" />
    <div className="absolute left-[489px] top-[94px] h-[89px] w-[108px] border-[5px] border-[#ff2a00]" />
    <div className="absolute left-[975px] top-[213px] h-[114px] w-[137px] border-[5px] border-[#ff2a00]" />
    <svg viewBox="0 0 2160 1483" className="pointer-events-none absolute left-0 top-0 h-[1483px] w-[2160px]">
      <path d="M262 97L455 133" stroke="#ff2a00" strokeWidth="5.5" />
      <polygon points="476,138 452,119 446,147" fill="#ff2a00" />
      <path d="M610 158L935 243" stroke="#ff2a00" strokeWidth="5.5" />
      <polygon points="953,248 934,232 927,254" fill="#ff2a00" />
      <path d="M1007 343C973 510 800 598 410 634L410 641C800 605 978 513 1011 343Z" fill="#ff2a00" />
      <polygon points="388,638 413,624 413,649" fill="#ff2a00" />
    </svg>
  </>
);

export default function App() {
  return (
    <div className="relative flex h-[1483px] w-[2160px] overflow-hidden bg-white font-['Noto_Sans_CJK_JP','Liberation_Sans',sans-serif]">
      <div className="flex w-[7px] shrink-0 flex-col">
        <div className="h-[200px] bg-[#e2e2e2]" />
        <div className="h-[30px] w-[5px] rounded-r-[3px] bg-black" />
        <div className="flex-1 bg-[#c6c6c6]" />
      </div>
      <div className="flex min-w-0 flex-1 flex-col">
        <div className="h-[90px] shrink-0 bg-linear-to-b from-[#317f58] to-[#1f6e40]">
          <TitleRow />
          <Tabs />
        </div>
        <Ribbon />
        <FormulaBar />
        <div className="h-[4px] shrink-0 border-b-2 border-[#c8c8c8] bg-[#f1f1f1]" />
        <Sheet />
        <StatusBar />
      </div>
      <SelectedShape />
      <Gallery />
      <Tooltip />
      <Annotations />
    </div>
  );
}
